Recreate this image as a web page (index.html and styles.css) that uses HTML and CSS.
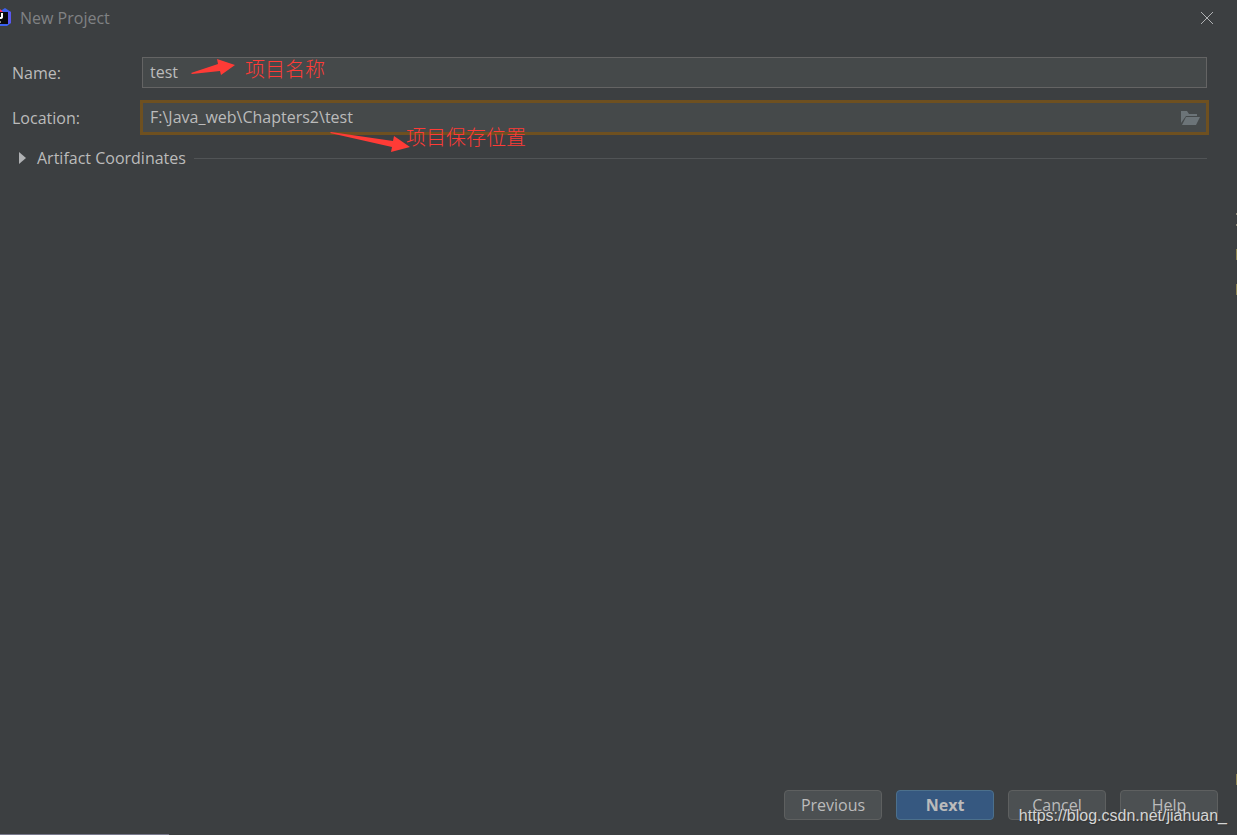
FILE: index.html
```html
<!DOCTYPE html>
<html lang="en">
<head>
  <meta charset="UTF-8">
  <meta name="viewport" content="width=device-width, initial-scale=1.0">
  <title>New Project</title>
  <link rel="stylesheet" href="styles.css">
</head>
<body>
  <div class="dialog">
    <header class="titlebar">
      <svg class="logo" width="12" height="20" viewBox="0 0 12 20">
        <path d="M2 2l3-2 6 4v11l-4 3H0V2z" fill="#3b62f0"/>
        <path d="M8 3l3 1v11l-3 1z" fill="#5b57f0"/>
        <path d="M0 1l3 3H0z" fill="#fc315e"/>
        <path d="M0 4h8v12H0z" fill="#0a0a0c"/>
        <path d="M2 5v4q0 1-2 1" fill="none" stroke="#fff" stroke-width="2"/>
        <path d="M0 14h1" stroke="#fff"/>
      </svg>
      <h1>New Project</h1>
      <button class="close" aria-label="Close">
        <svg width="12" height="12" viewBox="0 0 12 12"><path d="M0 0l12 12M12 0L0 12" stroke="#afb1b3" fill="none"/></svg>
      </button>
    </header>

    <main class="form">
      <div class="row">
        <label for="name">Name:</label>
        <div class="field">
          <input type="text" id="name" value="test">
          <div class="note note-name">
            <svg width="44" height="18" viewBox="0 0 44 18"><path d="M0 15L27 6 26 1 44 7 30 17 29 13 1 16z" fill="#ff3b36"/></svg>
            <span lang="zh">项目名称</span>
          </div>
        </div>
      </div>

      <div class="row">
        <label for="location">Location:</label>
        <div class="field">
          <input type="text" id="location" class="focused" value="F:\Java_web\Chapters2\test">
          <button class="browse" aria-label="Browse">
            <svg width="19" height="14" viewBox="0 0 19 14"><path d="M0 0h6l2 3h8v2H5L0 12z" fill="#6c7478"/><path d="M5 6h14l-4 8H1z" fill="#6c7478"/></svg>
          </button>
          <div class="note note-location">
            <svg width="80" height="22" viewBox="0 0 80 22"><path d="M0 1L1 0 63 9 64 4 80 15 61 20 62 15z" fill="#ff3b36"/></svg>
            <span lang="zh">项目保存位置</span>
          </div>
        </div>
      </div>

      <button class="section" aria-expanded="false">
        <svg width="7" height="12" viewBox="0 0 7 12"><path d="M0 0l7 6-7 6z" fill="#b0b2b4"/></svg>
        <span>Artifact Coordinates</span>
      </button>
    </main>

    <footer class="actions">
      <button>Previous</button>
      <button class="primary">Next</button>
      <button>Cancel</button>
      <button>Help</button>
    </footer>

    <div class="watermark">https://blog.csdn.net/jiahuan_</div>
    <div class="edge" aria-hidden="true"><i class="dot"></i><i class="dot"></i><i class="bar"></i><i class="bar"></i><i class="bar last"></i></div>
    <div class="taskline"></div>
  </div>
</body>
</html>
```
FILE: styles.css
```css
* { box-sizing: border-box; }
body { margin: 0; background: #3c3f41; color: #bbbbbb; font-family: "Open Sans", "Noto Sans CJK SC", sans-serif; font-size: 16px; line-height: 22px; }
button, input { font: inherit; color: inherit; }
button { padding: 0; cursor: pointer; }
svg { display: block; flex: none; }

.dialog { position: relative; min-height: 100vh; display: flex; flex-direction: column; overflow: hidden; }

.titlebar { display: flex; align-items: center; height: 36px; padding-right: 24px; }
.titlebar h1 { flex: 1; margin: 0 0 0 8px; font-size: 16px; font-weight: 400; color: #808284; }
.close { border: none; background: none; }

.form { flex: 1; display: flex; flex-direction: column; gap: 14px; padding: 21px 30px 0 12px; }
.row { display: flex; align-items: center; }
.row label { width: 130px; }
.field { position: relative; flex: 1; }
.field input { display: block; width: 100%; height: 31px; padding: 0 32px 2px 7px; border: 1px solid #646464; border-radius: 0; background: #45494a; outline: none; }
.field .focused { border-color: #6e5020; outline: 2px solid #6e5020; }
.browse { position: absolute; right: 7px; top: 9px; border: none; background: none; }

/* red notes over the fields */
.note { position: absolute; display: flex; color: #ff3b36; font-size: 20px; font-weight: 300; line-height: 24px; white-space: nowrap; pointer-events: none; }
.note-name { left: 49px; top: 1px; gap: 10px; }
.note-location { left: 188px; top: 24px; align-items: flex-end; }
.note-location svg { margin-bottom: -4px; }
.note-location span { margin-left: -4px; }

.section { display: flex; align-items: center; padding-left: 7px; border: none; background: none; text-align: left; }
.section span { margin: 0 8px 0 11px; }
.section::after { content: ""; flex: 1; height: 1px; background: #515456; }

.actions { display: flex; justify-content: flex-end; gap: 14px; padding: 0 19px 15px; }
.actions button { width: 98px; height: 30px; border: 1px solid #5e6060; border-radius: 4px; background: #4c5052; }
.actions .primary { border-color: #4c708c; background: #365880; font-weight: 700; }

.watermark { position: absolute; right: 10px; bottom: 9px; font-family: "Liberation Sans", Arial, sans-serif; font-size: 16px; line-height: 20px; color: #d4d5d5; text-shadow: 1px 1px 1px #333333; pointer-events: none; }

/* slivers of the window behind */
.edge { position: absolute; top: 213px; right: 0; bottom: 50px; width: 1px; display: flex; flex-direction: column; }
.dot { height: 2px; margin-bottom: 9px; background: #8f8a78; }
.bar { height: 11px; margin: 14px 0 10px; background: #8c8350; }
.last { margin-top: auto; margin-bottom: 0; }
.taskline { position: absolute; left: 0; bottom: 0; width: 169px; height: 1px; background: #77788a; }
```
